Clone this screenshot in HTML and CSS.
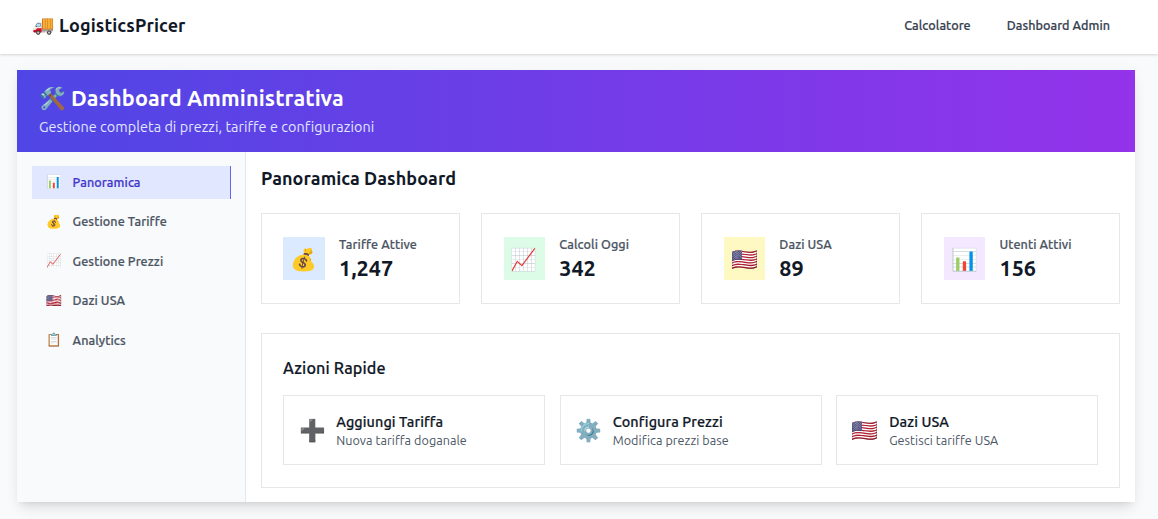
FILE: index.html
```html
<!DOCTYPE html>
<html lang="it">
<head>
<meta charset="utf-8">
<title>LogisticsPricer</title>
<link rel="stylesheet" href="styles.css">
</head>
<body>
<header class="topbar">
  <div class="brand"><span class="emoji">🚚</span><span class="brand-name">LogisticsPricer</span></div>
  <nav class="links"><a class="link-calc">Calcolatore</a><a class="link-admin">Dashboard Admin</a></nav>
</header>
<main class="shell">
  <section class="banner">
    <h1><span class="emoji">🛠️</span><span class="banner-title">Dashboard Amministrativa</span></h1>
    <p><span>Gestione completa di prezzi, tariffe e configurazioni</span></p>
  </section>
  <div class="body">
    <aside class="sidebar">
      <a class="item active"><span class="emoji">📊</span><span>Panoramica</span></a>
      <a class="item"><span class="emoji">💰</span><span>Gestione Tariffe</span></a>
      <a class="item"><span class="emoji">📈</span><span>Gestione Prezzi</span></a>
      <a class="item"><span class="emoji">🇺🇸</span><span>Dazi USA</span></a>
      <a class="item"><span class="emoji">📋</span><span>Analytics</span></a>
    </aside>
    <section class="content">
      <h2><span>Panoramica Dashboard</span></h2>
      <div class="stats">
        <div class="stat"><div class="tile blue emoji">💰</div><div><div class="label">Tariffe Attive</div><div class="value">1,247</div></div></div>
        <div class="stat"><div class="tile green emoji">📈</div><div><div class="label">Calcoli Oggi</div><div class="value">342</div></div></div>
        <div class="stat"><div class="tile yellow emoji">🇺🇸</div><div><div class="label">Dazi USA</div><div class="value">89</div></div></div>
        <div class="stat"><div class="tile purple emoji">📊</div><div><div class="label">Utenti Attivi</div><div class="value">156</div></div></div>
      </div>
      <div class="panel">
        <h3><span>Azioni Rapide</span></h3>
        <div class="actions">
          <div class="action"><span class="emoji">➕</span><div><div class="name">Aggiungi Tariffa</div><div class="desc">Nuova tariffa doganale</div></div></div>
          <div class="action"><span class="emoji">⚙️</span><div><div class="name">Configura Prezzi</div><div class="desc">Modifica prezzi base</div></div></div>
          <div class="action"><span class="emoji">🇺🇸</span><div><div class="name">Dazi USA</div><div class="desc">Gestisci tariffe USA</div></div></div>
        </div>
      </div>
    </section>
  </div>
</main>
</body>
</html>
```
FILE: styles.css
```css
* { box-sizing: border-box; margin: 0; padding: 0; }
body { height: 519px; overflow: hidden; background: #f9fafb; color: #111827; font-family: Ubuntu, "Noto Sans", sans-serif; font-size: 13px; letter-spacing: .05px; }
.emoji { font-family: "Noto Color Emoji", "Noto Sans", sans-serif; letter-spacing: 0; white-space: nowrap; }
.topbar { height: 54px; padding: 0 48px 4px 32px; background: #fff; box-shadow: 0 1px 3px rgba(0,0,0,.1), 0 1px 2px rgba(0,0,0,.06); display: flex; align-items: center; justify-content: space-between; }
.brand { display: flex; align-items: center; gap: 5px; height: 22px; line-height: 22px; font-size: 18px; font-weight: 700; letter-spacing: .11px; }
.brand .emoji { width: 22px; }
.links, .item, .label, .name, h3 { -webkit-text-stroke: .2px currentColor; letter-spacing: .09px; }
.links { display: flex; gap: 36px; height: 20px; line-height: 20px; font-size: 12.6px; font-weight: 500; letter-spacing: .04px; color: #374151; }
.shell { width: 1118px; height: 432px; margin: 16px 0 0 17px; background: #fff; box-shadow: 0 9px 13px -3px rgba(0,0,0,.1), 0 4px 6px -4px rgba(0,0,0,.1), 0 0 14px rgba(0,0,0,.03); }
.banner { height: 82px; padding: 12px 22px; color: #fff; background: linear-gradient(90deg, #4f46e5, #9333ea); }
.banner h1 { display: flex; align-items: center; gap: 5px; height: 32px; font-size: 21.6px; font-weight: 700; letter-spacing: .13px; }
.banner .emoji { width: 27px; }
.banner p { height: 26px; line-height: 26px; font-size: 14.4px; letter-spacing: .04px; color: #e0e7ff; }
.body { display: flex; height: 350px; }
.sidebar { width: 229px; padding: 14px 14px 0 15px; display: flex; flex-direction: column; gap: 6.5px; background: #f9fafb; border-right: 1px solid #e5e7eb; }
.item { height: 33px; padding: 0 0 1.4px 14px; display: flex; align-items: center; gap: 10.6px; font-size: 12.6px; font-weight: 500; color: #4b5563; }
.item .emoji { width: 16px; }
.item.active { background: #e0e7ff; color: #4338ca; border-right: 1px solid #6366f1; }
.content { flex: 1; padding: 14px 15px 0; }
h2 { height: 25px; line-height: 25px; font-size: 18px; font-weight: 700; letter-spacing: .07px; }
.stats { margin-top: 22px; display: grid; grid-template-columns: repeat(4, 198.6px); justify-content: space-between; }
.stat { height: 91px; padding: 0 21.4px; display: flex; align-items: center; gap: 14.2px; border: 1px solid #e5e7eb; }
.tile { width: 41.5px; height: 43px; padding-top: 1px; display: flex; align-items: center; justify-content: center; font-size: 21.6px; }
.blue { background: #dbeafe; }
.green { background: #dcfce7; }
.yellow { background: #fef9c3; }
.purple { background: #f3e8ff; }
.label { height: 19px; line-height: 19px; font-size: 12.6px; font-weight: 500; color: #4b5563; }
.value { height: 28px; line-height: 28px; font-size: 21.6px; font-weight: 700; letter-spacing: 0; }
.panel { margin-top: 29px; height: 155px; padding: 22px 21px 0; border: 1px solid #e5e7eb; }
h3 { height: 25px; line-height: 25px; font-size: 16.2px; font-weight: 500; letter-spacing: .14px; }
.actions { margin-top: 14px; display: grid; grid-template-columns: repeat(3, 262px); justify-content: space-between; }
.action { height: 70px; padding-left: 14.6px; display: flex; align-items: center; gap: 10.6px; border: 1px solid #e5e7eb; }
.action:first-child { padding-left: 15px; gap: 10.2px; }
.action .emoji { width: 27px; font-size: 21.6px; }
.name { height: 20px; line-height: 22px; font-size: 14.4px; font-weight: 500; }
.desc { height: 18px; line-height: 18px; font-size: 12.6px; color: #4b5563; }
```
